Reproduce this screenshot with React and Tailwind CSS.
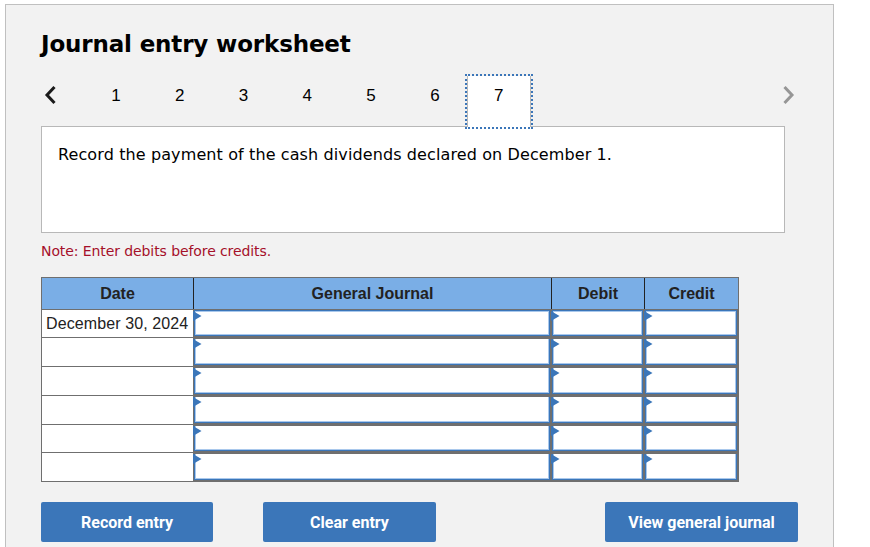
import React from 'react';

const steps = [1, 2, 3, 4, 5, 6, 7];
const rows = [
  { date: 'December 30, 2024', height: 'h-[28px]' },
  { date: '', height: 'h-[29px]' },
  { date: '', height: 'h-[29px]' },
  { date: '', height: 'h-[29px]' },
  { date: '', height: 'h-[28px]' },
  { date: '', height: 'h-[29px]' },
];

function EntryCell({ width, first }) {
  return (
    <div className={`relative shrink-0 bg-[#6f6f6f] px-px pb-px ${first ? '' : 'pt-px'} ${width}`}>
      <div
        className={`h-full border-x border-b border-[#3b76b9] bg-white ${
          first ? 'border-t shadow-[inset_0_0_0_1px_#a9c8ec]' : 'shadow-[inset_1px_0_0_#a9c8ec,inset_-1px_0_0_#a9c8ec,inset_0_-1px_0_#a9c8ec]'
        }`}
      />
      <svg className="absolute left-0 top-px" width="9" height="10" viewBox="0 0 9 10">
        <path d="M0 0 L8.5 5 L0 10 Z" fill="#3b76b9" />
      </svg>
    </div>
  );
}

function ActionButton({ label, width }) {
  return (
    <button className={`h-10 rounded-[2px] bg-[#3b76b9] pt-px text-[16px] font-bold text-white font-['Roboto',sans-serif] ${width}`}>
      {label}
    </button>
  );
}

export default function App() {
  return (
    <div className="h-[547px] w-[870px] overflow-hidden bg-white pl-[5px] pt-1">
      <div className="h-[543px] w-[829px] border-x border-t border-[#c0c0c0] bg-[#f2f2f2] pl-[35px] pt-[23px]">
        <h1 className="text-[23px] leading-[32px] font-bold tracking-[-0.15px] text-black font-['DejaVu_Sans',sans-serif]">
          Journal entry worksheet
        </h1>

        <div className="relative z-10 mt-[14px] flex h-[54px] items-start">
          <svg className="ml-[3px] mt-[11px] shrink-0" width="13" height="20" viewBox="0 0 13 20">
            <path d="M10.5 2 L3 10 L10.5 18" fill="none" stroke="#1a1a1a" strokeWidth="3" />
          </svg>
          <div className="ml-[27px] mt-[2px] flex">
            {steps.map((n) => (
              <div
                key={n}
                className={`h-[51px] w-[63.8px] text-center text-[17px] leading-[40px] text-black font-['Liberation_Sans',sans-serif] ${
                  n === 7 ? 'border-x border-[#b8b8b8] bg-white outline-2 outline-dotted outline-[#3b76b9]' : ''
                }`}
              >
                {n}
              </div>
            ))}
          </div>
          <svg className="ml-[251px] mt-[11px] shrink-0" width="13" height="20" viewBox="0 0 13 20">
            <path d="M2.5 2 L10 10 L2.5 18" fill="none" stroke="#969696" strokeWidth="3" />
          </svg>
        </div>

        <div className="-mt-[2px] h-[107px] w-[744px] border border-[#b8b8b8] bg-white pl-4 pt-4 text-[16px] leading-[24px] tracking-[0.11px] text-black font-['DejaVu_Sans',sans-serif]">
          Record the payment of the cash dividends declared on December 1.
        </div>

        <p className="mt-[9px] text-[14px] leading-[18px] tracking-[-0.09px] text-[#a5102a] font-['DejaVu_Sans',sans-serif]">
          Note: Enter debits before credits.
        </p>

        <div className="mt-[17px] w-[698px] border border-[#6f6f6f] font-['Liberation_Sans',sans-serif]">
          <div className="flex h-[31px] bg-[#7aaee6] text-[16px] font-bold text-[#222]">
            <div className="flex w-[152px] items-center justify-center border-r border-[#222]">Date</div>
            <div className="flex w-[358px] items-center justify-center border-r border-[#222]">General Journal</div>
            <div className="flex w-[93px] items-center justify-center border-r border-[#222]">Debit</div>
            <div className="flex w-[93px] items-center justify-center">Credit</div>
          </div>
          {rows.map((row, i) => (
            <div key={i} className={`flex border-t border-[#6f6f6f] first:border-[#222] ${row.height}`}>
              <div className="flex w-[151px] shrink-0 items-center bg-white pl-1 text-[16px] tracking-[0.1px] text-[#222]">{row.date}</div>
              <EntryCell first={i === 0} width="w-[358px]" />
              <EntryCell first={i === 0} width="w-[93px]" />
              <EntryCell first={i === 0} width="w-[94px]" />
            </div>
          ))}
        </div>

        <div className="mt-5 flex">
          <ActionButton label="Record entry" width="w-[172px]" />
          <ActionButton label="Clear entry" width="ml-[50px] w-[173px]" />
          <ActionButton label="View general journal" width="ml-[169px] w-[193px]" />
        </div>
      </div>
    </div>
  );
}
